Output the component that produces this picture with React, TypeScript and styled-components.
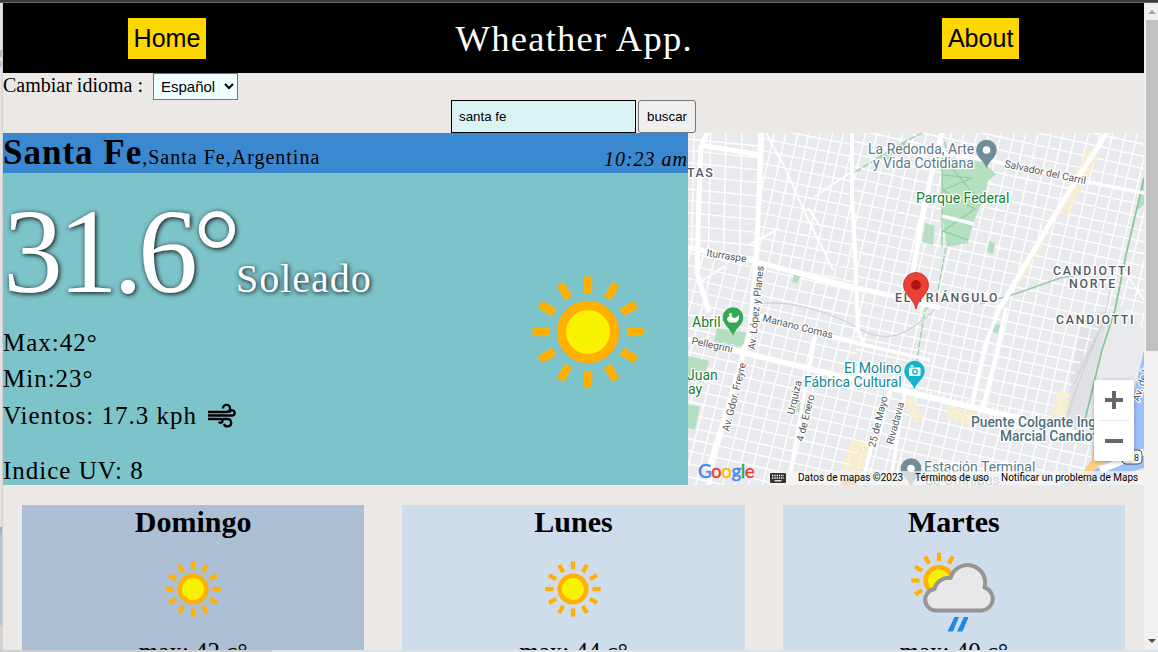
import React from "react";
import styled, { createGlobalStyle } from "styled-components";

const GlobalStyle = createGlobalStyle`
  * { box-sizing: border-box; }
  body {
    margin: 0;
    overflow: hidden;
    font-family: "Liberation Serif", "Times New Roman", serif;
    color: #000;
  }
`;

const Screen = styled.div`
  display: grid;
  grid-template-columns: 3px 1141px 14px;
  grid-template-rows: 3px 647px 2px;
  width: 1158px;
  height: 652px;
  overflow: hidden;
`;

const TopEdge = styled.div`
  grid-column: 1 / -1;
  background: #3b3b3b;
  border-bottom: 1px solid #696969;
`;

const LeftEdge = styled.div`
  background: linear-gradient(
    #e2e2e2 0 47px, #c9a9bd 47px 54px, #e2e2e2 54px 58px, #b9c2d6 58px 64px,
    #e2e2e2 64px 524px, #9aa5b8 524px, #b9c3d6 534px 622px, #d2d2d2 623px
  );
  border-right: 1px solid #d2d2d2;
`;

const BottomEdge = styled.div`
  grid-column: 1 / -1;
  background: linear-gradient(90deg, #cfcfcf 0 272px, #dbe3e6 272px);
`;

const Page = styled.div`
  display: flex;
  flex-direction: column;
  height: 647px;
  overflow: hidden;
  background: #ece8e5;
`;

const Header = styled.header`
  display: flex;
  flex: none;
  align-items: center;
  justify-content: space-around;
  height: 70px;
  background: #000;
`;

const NavLink = styled.a`
  padding: 6px;
  background: #ffd700;
  color: #000;
  font: 25.1px/29px "Liberation Sans", Arial, sans-serif;
`;

const Title = styled.h1`
  margin: 0;
  color: #fff;
  font-size: 36.5px;
  font-weight: 400;
  letter-spacing: 1.25px;
`;

const LanguageRow = styled.label`
  display: flex;
  flex: none;
  height: 27px;
  font-size: 20px;
  line-height: 25px;
`;

const LanguageSelect = styled.select`
  width: 85px;
  height: 27px;
  margin-left: 10px;
  padding: 0 0 0 3px;
  border: 1px solid #767676;
  border-radius: 0;
  background: azure;
  color: #000;
  font: 15px "Liberation Sans", Arial, sans-serif;
`;

const SearchRow = styled.form`
  display: flex;
  flex: none;
  justify-content: center;
  gap: 2px;
  height: 33px;
`;

const SearchInput = styled.input`
  width: 185px;
  padding: 0 7px;
  border: 1px solid #000;
  background: #daf4f5;
  color: #000;
  font: 13.33px "Liberation Sans", Arial, sans-serif;
`;

const SearchButton = styled.button`
  width: 58px;
  padding: 0;
  border: 1px solid #767676;
  border-radius: 3px;
  background: #efefef;
  color: #000;
  font: 13.33px "Liberation Sans", Arial, sans-serif;
`;

const Current = styled.section`
  display: grid;
  flex: none;
  grid-template-columns: 685px 456px;
  height: 352px;
`;

const Weather = styled.div`
  display: flex;
  flex-direction: column;
  background: #7cc4ca;
  letter-spacing: 1px;
`;

const PlaceBar = styled.div`
  display: flex;
  justify-content: space-between;
  height: 40px;
  background: #3a88cf;
  font-size: 20px;
  white-space: nowrap;
`;

const Place = styled.div`
  line-height: 40px;
`;

const City = styled.b`
  font-size: 35px;
`;

const LocalTime = styled.i`
  padding-top: 15px;
  line-height: 23px;
`;

const Conditions = styled.div`
  display: flex;
  justify-content: space-between;
  height: 312px;
`;

const Readings = styled.div`
  display: flex;
  flex-direction: column;
  font-size: 25px;
  line-height: 29px;
`;

const Temperature = styled.div`
  height: 154px;
  color: #fff;
  font-size: 120px;
  line-height: 158px;
  letter-spacing: -5px;
  text-shadow: 1px 1px 5px #000;
  white-space: nowrap;
`;

const Summary = styled.span`
  font-size: 40px;
  letter-spacing: 1px;
`;

const Reading = styled.div<{ $gap?: number }>`
  display: flex;
  align-items: center;
  gap: 10px;
  height: 29px;
  margin-top: ${(p) => p.$gap ?? 7}px;
`;

const BigIcon = styled.div`
  width: 200px;
  height: 300px;
  padding-top: 59px;
  filter: blur(0.6px);
`;

const MapPane = styled.div`
  position: relative;
  overflow: hidden;
  background: #e8eaed;
`;

const ZoomControl = styled.div`
  position: absolute;
  right: 10px;
  bottom: 24px;
  display: flex;
  flex-direction: column;
  width: 40px;
  height: 81px;
  border-radius: 2px;
  background: #fff;
  box-shadow: 0 1px 4px rgba(0, 0, 0, 0.3);
`;

const ZoomButton = styled.div`
  display: flex;
  flex: 1;
  align-items: center;
  justify-content: center;
  & + &::before {
    content: "";
    position: absolute;
    top: 40px;
    left: 5px;
    width: 30px;
    height: 1px;
    background: #e6e6e6;
  }
`;

const GoogleMark = styled.div`
  position: absolute;
  left: 10px;
  bottom: 2px;
  font: 500 18.8px/24px Lato, "Open Sans", sans-serif;
  letter-spacing: -0.5px;
  -webkit-text-stroke: 0.3px;
`;

const Letter = styled.span<{ $color: string }>`
  color: ${(p) => p.$color};
`;

const Attribution = styled.div`
  position: absolute;
  right: 0;
  bottom: 0;
  display: flex;
  align-items: center;
  width: 377px;
  height: 14px;
  padding: 0 6px 0 3px;
  background: rgba(245, 245, 245, 0.72);
  color: #000;
  font: 10px/14px Roboto, sans-serif;
  white-space: nowrap;
`;

const Credit = styled.span<{ $width: number; $left: number }>`
  width: ${(p) => p.$width}px;
  margin-left: ${(p) => p.$left}px;
`;

const Forecast = styled.section`
  display: grid;
  grid-template-columns: repeat(3, 1fr);
  flex: none;
  padding-top: 20px;
`;

const DayCard = styled.article<{ $today?: boolean }>`
  display: flex;
  flex-direction: column;
  align-items: center;
  height: 300px;
  margin: 0 19px;
  background: ${(p) => (p.$today ? "#adbfd5" : "#cfdcec")};
  font-size: 25px;
`;

const DayName = styled.h2`
  margin: 0;
  font-size: 30px;
  line-height: 34px;
`;

const DayIcon = styled.div`
  width: 100px;
  height: 98px;
  filter: blur(0.3px);
`;

const DayMax = styled.div`
  line-height: 29px;
`;

const Scrollbar = styled.div`
  display: flex;
  flex-direction: column;
  align-items: center;
  padding-left: 2px;
  background: #f0f0f0;
`;

const Arrow = styled.div<{ $down?: boolean }>`
  width: 0;
  height: 0;
  border: 4px solid transparent;
  ${(p) =>
    p.$down
      ? "border-top-color:#505050;border-bottom:0;margin:auto 0 7px;"
      : "border-bottom-color:#a3a3a3;border-top:0;margin:7px 0 6px;"}
`;

const Thumb = styled.div`
  width: 12px;
  height: 331px;
  background: #c1c1c1;
`;

const RAYS = Array.from({ length: 12 }, (_, i) => i * 30);

function SunShape({ rays = RAYS }: { rays?: number[] }) {
  return (
    <g>
      {rays.map((a) => (
        <rect key={a} x={-2.1} y={-27.7} width={4.2} height={8.2} fill="#ffb000" transform={`rotate(${a})`} />
      ))}
      <circle r={13.3} fill="#fdf000" stroke="#ffb000" strokeWidth={4.6} />
      <circle r={8} fill="#f6f200" />
    </g>
  );
}

function SunIcon({ size }: { size: number }) {
  return (
    <svg width={size} height={size} viewBox="-50 -50 100 100">
      <SunShape />
    </svg>
  );
}

function SunRainIcon() {
  return (
    <svg width={100} height={100} viewBox="904 539 100 100">
      <g transform="translate(939 580.5)">
        <SunShape rays={[240, 270, 300, 330, 0, 30]} />
      </g>
      <path
        d="M936 610.5a10.800 10.800 0 0 1-1.500-21.500a14.500 14.500 0 0 1 16-11a17.500 17.500 0 0 1 34 9.500a11.800 11.800 0 0 1-2.500 23z"
        fill="#e8e8ea"
        stroke="#959595"
        strokeWidth={4}
        strokeLinejoin="round"
      />
      <path d="M954.500 617h4.500l-6 14.500h-5.500zM964 617h4.500l-6 14.500h-5.500z" fill="#1e88e5" />
    </svg>
  );
}

function WindIcon() {
  return (
    <svg width={30} height={26} viewBox="207 403 30 26" fill="none" stroke="#000" strokeWidth={2.3}>
      <path d="M208 412h18.500a3.600 3.600 0 1 0-3.600-3.600" />
      <path d="M208 415.500h24a2.600 2.600 0 1 0-2.600-2.600" />
      <path d="M208 419h12.500a1.900 1.900 0 1 1-1.600 2.700" />
      <path d="M223 419h4.500a3.700 3.700 0 1 1-3.500 5" />
    </svg>
  );
}

/* Parallel streets: `lean` is the sideways shift per unit along the street. */
function Streets({
  clip,
  box,
  stepX,
  stepY,
  leanX,
  leanY,
}: {
  clip: string;
  box: [number, number, number, number];
  stepX: number;
  stepY: number;
  leanX: number;
  leanY: number;
}) {
  const [x0, y0, x1, y1] = box;
  const parts: string[] = [];
  const h = y1 - y0;
  const w = x1 - x0;
  let n = 0;
  for (let x = x0 - 10; x < x1 + h * leanX; x += stepX + (n % 3) * 0.7 - 0.7) {
    parts.push(`M${x.toFixed(1)} ${y0}L${(x - h * leanX).toFixed(1)} ${y1}`);
    n++;
  }
  for (let y = y0 - w * leanY; y < y1; y += stepY + (n % 4) * 0.6 - 0.9) {
    parts.push(`M${x0} ${y.toFixed(1)}L${x1} ${(y + w * leanY).toFixed(1)}`);
    n++;
  }
  return <path d={parts.join("")} clipPath={`url(#${clip})`} stroke="#fff" strokeWidth={1.4} fill="none" />;
}

const MapLabel = styled.text<{ $color?: string; $size?: number; $weight?: number; $track?: number }>`
  fill: ${(p) => p.$color ?? "#55585d"};
  font: ${(p) => p.$weight ?? 400} ${(p) => p.$size ?? 14}px Roboto, sans-serif;
  letter-spacing: ${(p) => p.$track ?? 0}px;
  stroke: #fff;
  stroke-width: 2.5px;
  stroke-linejoin: round;
  paint-order: stroke;
`;

function Pin({ x, y, color, children }: { x: number; y: number; color: string; children?: React.ReactNode }) {
  return (
    <g transform={`translate(${x} ${y})`}>
      <path d="M0 18.500C-2 11-10.300 7.500-10.300 0a10.300 10.300 0 1 1 20.600 0C10.300 7.500 2 11 0 18.500z" fill={color} />
      {children}
    </g>
  );
}

function CityMap() {
  return (
    <svg width={456} height={352} viewBox="688 133 456 352">
      <defs>
        <clipPath id="west"><path d="M688 133H761L757 262 688 248z" /></clipPath>
        <clipPath id="mid"><path d="M761 133H852L853 197 857 288 754 262z" /></clipPath>
        <clipPath id="east"><path d="M852 133H1144V330L1120 305 1098 330 1075 372 1064 420 1020 418 856 384z" /></clipPath>
        <clipPath id="south"><path d="M688 248L857 289 857 375 1064 422 1090 440 1094 485H688z" /></clipPath>
      </defs>

      <path d="M1082 318L1108 310 1092 400 1075 440 1064 420z" fill="#dfe1e5" />
      <Streets clip="west" box={[688, 133, 762, 264]} stepX={16} stepY={12.500} leanX={0.02} leanY={0.1} />
      <Streets clip="mid" box={[750, 133, 860, 295]} stepX={11.500} stepY={12.500} leanX={0.23} leanY={0.2} />
      <Streets clip="east" box={[850, 133, 1144, 425]} stepX={12.400} stepY={12.200} leanX={0.24} leanY={0.22} />
      <Streets clip="south" box={[688, 248, 1100, 485]} stepX={13.200} stepY={12.400} leanX={0.26} leanY={0.23} />

      <g fill="#b4dfc1">
        <path d="M942 158L983 162 996 174 988 181 985 195 975 218 969 238 968 243 947 247 942 216z" />
        <path d="M925 223L935 226 933 245 922 242zM989 241L995 243 993 254 987 252zM992 323L1000 325 998 334 990 331z" />
        <path d="M794 274L801 276 797 283 792 282zM797 400L806 404 803 413 795 411z" />
        <path d="M717 328L748 333 750 339 740 347 714 342zM688 356L709 361 703 382 688 380zM688 404L700 407 695 430 688 428z" />
        <path d="M875 159L895 146 906 141 906 147 888 160z" />
        <path d="M1142 180L1144 177V205L1138 209z" />
      </g>
      <path d="M942 158V247M942 175L972 178 943 190 975 209 943 231 968 240M945 159L970 190 978 196" stroke="#8acb9e" strokeWidth={1.1} fill="none" />

      <g fill="none" stroke="#fbeecb" strokeDasharray="5 1.600">
        <path d="M1093 152L1062 213" strokeWidth={13} />
        <path d="M1040 243L1017 279" strokeWidth={8} />
        <path d="M948 412L972 419" strokeWidth={13} />
        <path d="M1064 392L1057 422" strokeWidth={14} />
        <path d="M907 399L920 422" strokeWidth={11} />
        <path d="M861 442L846 485" strokeWidth={20} />
      </g>

      <path d="M855 172L906 141 922 133M942 133L948 155M946 247L938 290 931 305 925 310 920 340 914 385" stroke="#8fcfa2" strokeWidth={1.2} fill="none" strokeDasharray="7 2" />
      <path d="M1144 178L1126 255 1115 310 1102 350 1085 420" stroke="#84c697" strokeWidth={1.7} fill="none" />
      <path d="M980 304L1018 293 1060 278 1078 275" stroke="#97cca5" strokeWidth={1.4} fill="none" />
      <path d="M755 304C790 299 830 312 860 329S910 333 940 305M1110 290C1108 320 1080 370 1068 415M1105 318L1074 384" stroke="#cfd1d5" strokeWidth={1.2} fill="none" />

      <g fill="none" stroke="#fff" strokeLinejoin="round">
        <g strokeWidth={5}>
          <path d="M708 131L701 147 699 197 697 273 709 312" />
          <path d="M700 145L761 155M762 131L759 200 756 262 750 330 743 355 727 410 711 460 709 487" />
          <path d="M686 247L754 261 805 275 856 288 893 296 940 308" />
          <path d="M852 131L852 197 855 250 858 330 864 345" strokeWidth={4} />
          <path d="M686 339L733 350 819 371 903 391 987 411 1040 425 1090 436" strokeWidth={5.500} />
          <path d="M943 131L930 180 920 230 910 290" />
          <path d="M1108 131L1070 190 1040 240 1000 308" />
        </g>
        <g strokeWidth={3.600}>
          <path d="M758 315L830 337 930 360M945 153L1003 163 1087 182 1144 193" />
          <path d="M1000 308L985 345 971 408M1006 308L996 355 982 410M942 216L974 224" />
          <path d="M817 328L806 385 796 440 788 485M895 375L873 440 862 485M905 392L890 485" />
        </g>
        <g strokeWidth={1.800}>
          <path d="M766 133L785 168 805 213 833 270M814 197L850 173M808 208L820 226M700 282L725 266M749 245L780 228M1144 300L1120 265" />
        </g>
      </g>

      <path d="M1137 380L1144 350V468L1085 485H1060L1094 470 1120 455z" fill="#9cc0f9" />
      <path d="M1093 446L1092 460 1072 485H1082L1098 466 1112 460 1144 454V449L1110 455z" fill="#fdd17f" />
      <path d="M1100 470L1144 452" stroke="#fff" strokeWidth={7} />
      <rect x={1122} y={450} width={20} height={14} rx={4} fill="#fff" stroke="#555" />
      <MapLabel x={1134} y={460.500} $size={9} $color="#333">8</MapLabel>

      <MapLabel x={687} y={176.500} $size={12.500} $weight={500} $track={1.500}>TAS</MapLabel>
      <MapLabel x={868} y={153.500} $color="#5c7987">La Redonda, Arte</MapLabel>
      <MapLabel x={873} y={167.500} $color="#5c7987">y Vida Cotidiana</MapLabel>
      <MapLabel x={916} y={203} $color="#178139">Parque Federal</MapLabel>
      <MapLabel x={0} y={0} $size={10.300} transform="translate(1004 167) rotate(12)">Salvador del Carril</MapLabel>
      <MapLabel x={0} y={0} $size={10.200} transform="translate(706 256) rotate(9)">Iturraspe</MapLabel>
      <MapLabel x={895} y={301.500} $size={12.300} $weight={500} $track={1.750}>EL TRIÁNGULO</MapLabel>
      <MapLabel x={1053} y={274.500} $size={12.300} $weight={500} $track={1.800}>CANDIOTTI</MapLabel>
      <MapLabel x={1069} y={287.500} $size={12.300} $weight={500} $track={1.800}>NORTE</MapLabel>
      <MapLabel x={1056} y={323.500} $size={12.300} $weight={500} $track={1.800}>CANDIOTTI</MapLabel>
      <MapLabel x={692} y={327} $color="#178139">Abril</MapLabel>
      <MapLabel x={687} y={380} $color="#178139">Juan</MapLabel>
      <MapLabel x={688} y={394} $color="#178139">ay</MapLabel>
      <MapLabel x={0} y={0} $size={10.200} transform="translate(691 344) rotate(12)">Pellegrini</MapLabel>
      <MapLabel x={0} y={0} $size={10.200} transform="translate(762 321) rotate(14)">Mariano Comas</MapLabel>
      <MapLabel x={0} y={0} $size={10.200} transform="translate(755 350) rotate(-84)">Av. López y Planes</MapLabel>
      <MapLabel x={0} y={0} $size={10.200} transform="translate(729 432) rotate(-76)">Av. Gdor. Freyre</MapLabel>
      <MapLabel x={0} y={0} $size={10.200} transform="translate(794 415) rotate(-77)">Urquiza</MapLabel>
      <MapLabel x={0} y={0} $size={10.200} transform="translate(803 442) rotate(-76)">4 de Enero</MapLabel>
      <MapLabel x={0} y={0} $size={10.200} transform="translate(875 448) rotate(-76)">25 de Mayo</MapLabel>
      <MapLabel x={0} y={0} $size={10.200} transform="translate(893 445) rotate(-75)">Rivadavia</MapLabel>
      <MapLabel x={0} y={0} $size={10.200} transform="translate(1139 402) rotate(-72)">Av. de la</MapLabel>
      <MapLabel x={844} y={373} $color="#0e8a96">El Molino</MapLabel>
      <MapLabel x={804} y={387} $color="#0e8a96">Fábrica Cultural</MapLabel>
      <MapLabel x={971} y={427} $color="#4f6f7d" $weight={500} $size={13.800}>Puente Colgante Ing</MapLabel>
      <MapLabel x={1000} y={441} $color="#4f6f7d" $weight={500} $size={13.800}>Marcial Candioti</MapLabel>
      <MapLabel x={924} y={472} $color="#5c7987">Estación Terminal</MapLabel>
      <MapLabel x={925} y={485} $color="#5c7987">de Ómnibus</MapLabel>

      <Pin x={986.500} y={150} color="#728d9a"><circle r={3.800} fill="#fff" /></Pin>
      <Pin x={911} y={468.500} color="#728d9a"><circle r={3.800} fill="#fff" /></Pin>
      <Pin x={733} y={317.500} color="#34a853">
        <path d="M-6 1q3-5 6-1q3 2 6-3v4q-1 4-4 4h-5q-3-1-3-4z" fill="#fff" />
        <circle cx={-2.500} cy={-3} r={1.600} fill="#fff" />
      </Pin>
      <Pin x={914.500} y={371} color="#12b5cb">
        <rect x={-5.500} y={-3.500} width={11.500} height={8.500} rx={1} fill="#fff" />
        <path d="M-4-5h3" stroke="#fff" strokeWidth={1.500} />
        <circle cy={0.700} cx={0.500} r={2.300} fill="none" stroke="#12b5cb" strokeWidth={1.400} />
      </Pin>
      <circle cx={849} cy={487} r={8.500} fill="#f6a54b" />
      <path
        d="M916 309C914 299 903.500 294 903.500 285a12.500 12.500 0 0 1 25 0C928.500 294 918 299 916 309z"
        fill="#ea4335"
        stroke="#c5221f"
        strokeWidth={0.800}
      />
      <circle cx={916} cy={285} r={4.900} fill="#b31412" />
    </svg>
  );
}

const GOOGLE: [string, string][] = [
  ["G", "#4285f4"],
  ["o", "#ea4335"],
  ["o", "#fbbc04"],
  ["g", "#4285f4"],
  ["l", "#34a853"],
  ["e", "#ea4335"],
];

function KeyboardIcon() {
  return (
    <svg width={16} height={10} viewBox="0 0 16 10">
      <rect width={16} height={10} rx={1} fill="#333" />
      <path d="M2 2.500h12M2 5h12" stroke="#fff" strokeWidth={1.300} strokeDasharray="1.300 1" />
      <path d="M4.500 7.800h7" stroke="#fff" strokeWidth={1.200} />
    </svg>
  );
}

export default function App() {
  return (
    <Screen>
      <GlobalStyle />
      <TopEdge />
      <LeftEdge />
      <Page>
        <Header>
          <NavLink>Home</NavLink>
          <Title>Wheather App.</Title>
          <NavLink>About</NavLink>
        </Header>
        <LanguageRow>
          Cambiar idioma :
          <LanguageSelect defaultValue="es">
            <option value="es">Español</option>
          </LanguageSelect>
        </LanguageRow>
        <SearchRow>
          <SearchInput defaultValue="santa fe" />
          <SearchButton type="button">buscar</SearchButton>
        </SearchRow>
        <Current>
          <Weather>
            <PlaceBar>
              <Place>
                <City>Santa Fe</City>,Santa Fe,Argentina
              </Place>
              <LocalTime>10:23 am</LocalTime>
            </PlaceBar>
            <Conditions>
              <Readings>
                <Temperature>
                  31.6°<Summary>Soleado</Summary>
                </Temperature>
                <Reading $gap={1}>Max:42°</Reading>
                <Reading>Min:23°</Reading>
                <Reading $gap={8}>
                  Vientos: 17.3 kph <WindIcon />
                </Reading>
                <Reading $gap={25.5}>Indice UV: 8</Reading>
              </Readings>
              <BigIcon>
                <SunIcon size={200} />
              </BigIcon>
            </Conditions>
          </Weather>
          <MapPane>
            <CityMap />
            <GoogleMark>
              {GOOGLE.map(([ch, color], i) => (
                <Letter key={i} $color={color}>{ch}</Letter>
              ))}
            </GoogleMark>
            <Attribution>
              <KeyboardIcon />
              <Credit $width={105} $left={12}>Datos de mapas ©2023</Credit>
              <Credit $width={74} $left={12}>Términos de uso</Credit>
              <Credit $width={137} $left={12}>Notificar un problema de Maps</Credit>
            </Attribution>
            <ZoomControl>
              <ZoomButton>
                <svg width={18} height={18}><path d="M0 9h18M9 0v18" stroke="#666" strokeWidth={4} /></svg>
              </ZoomButton>
              <ZoomButton>
                <svg width={18} height={18}><path d="M0 9h18" stroke="#666" strokeWidth={4} /></svg>
              </ZoomButton>
            </ZoomControl>
          </MapPane>
        </Current>
        <Forecast>
          <DayCard $today>
            <DayName>Domingo</DayName>
            <DayIcon><SunIcon size={100} /></DayIcon>
            <DayMax>max: 42 c°</DayMax>
          </DayCard>
          <DayCard>
            <DayName>Lunes</DayName>
            <DayIcon><SunIcon size={100} /></DayIcon>
            <DayMax>max: 44 c°</DayMax>
          </DayCard>
          <DayCard>
            <DayName>Martes</DayName>
            <DayIcon><SunRainIcon /></DayIcon>
            <DayMax>max: 40 c°</DayMax>
          </DayCard>
        </Forecast>
      </Page>
      <Scrollbar>
        <Arrow />
        <Thumb />
        <Arrow $down />
      </Scrollbar>
      <BottomEdge />
    </Screen>
  );
}
